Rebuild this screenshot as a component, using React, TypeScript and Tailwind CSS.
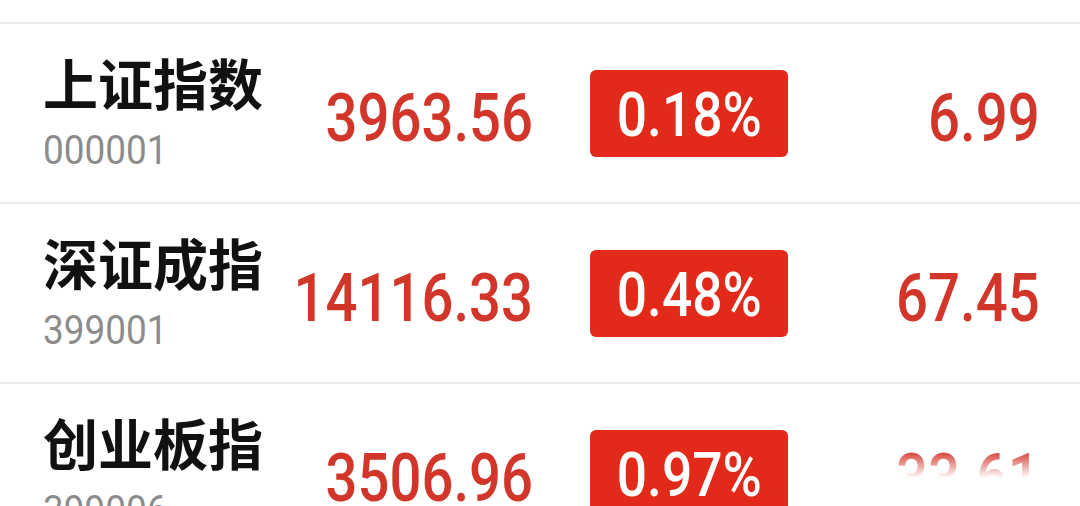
import React from "react";

const rows = [
  { name: "上证指数", code: "000001", price: "3963.56", pct: "0.18%", chg: "6.99" },
  { name: "深证成指", code: "399001", price: "14116.33", pct: "0.48%", chg: "67.45" },
  { name: "创业板指", code: "399006", price: "3506.96", pct: "0.97%", chg: "33.61" },
];

const num = { fontFamily: "Roboto, 'Liberation Sans', sans-serif" };
const cjk = { fontFamily: "'Noto Sans CJK SC', 'Noto Sans', sans-serif" };

export default function App() {
  return (
    <div className="relative w-[1080px] h-[506px] overflow-hidden bg-white">
      <div className="h-[22px]" />
      {rows.map((r) => (
        <div
          key={r.code}
          className="flex h-[180px] items-center border-t-2 border-[#ebebeb] pl-[43px]"
        >
          <div className="flex w-[200px] flex-col pb-[6px]">
            <div
              className="h-[58px] whitespace-nowrap text-[55px] font-bold leading-[58px] text-[#111111]"
              style={cjk}
            >
              {r.name}
            </div>
            <div
              className="mt-[21px] h-[38px] origin-left scale-x-[0.9] text-[41px] leading-[38px] text-[#8c8c8c]"
              style={num}
            >
              {r.code}
            </div>
          </div>
          <div
            className="mt-[10px] w-[290px] origin-right scale-x-[0.84] whitespace-nowrap text-right text-[67px] font-medium leading-none text-[#d2362a]"
            style={num}
          >
            {r.price}
          </div>
          <div className="ml-[57px] flex h-[87px] w-[198px] items-center justify-center rounded-[6px] bg-[#e2291a]">
            <span
              className="mt-[4px] scale-x-[0.86] text-[62px] font-medium leading-none text-white"
              style={num}
            >
              {r.pct}
            </span>
          </div>
          <div
            className="mt-[10px] flex-1 origin-right scale-x-[0.84] whitespace-nowrap pr-[48px] text-right text-[67px] font-medium leading-none text-[#d2362a]"
            style={num}
          >
            {r.chg}
          </div>
        </div>
      ))}
      <div className="absolute right-0 bottom-0 h-[56px] w-[200px] bg-gradient-to-b from-transparent via-white to-white" />
    </div>
  );
}
